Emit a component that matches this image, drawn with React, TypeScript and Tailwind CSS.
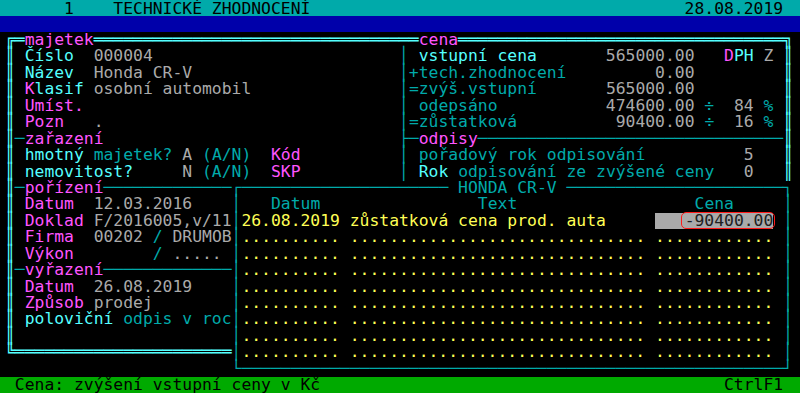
import React from "react";

type Seg = [string, string];

const F = "text-[#55ffff]"; // double frame
const BC = "text-[#55ffff]"; // bright cyan labels
const DC = "text-[#00aaaa]"; // dark cyan
const M = "text-[#ff55ff]"; // magenta
const G = "text-[#aaaaaa]"; // gray values
const Y = "text-[#ffff55]"; // yellow

const sp = (n: number) => " ".repeat(n);
const rep = (ch: string, n: number) => ch.repeat(n);

function Line({ segs, className = "" }: { segs: Seg[]; className?: string }) {
  return (
    <div className={"h-[16.45px] whitespace-pre pl-[5px] " + className}>
      {segs.map(([t, c], i) => (
        <span key={i} className={c}>
          {t}
        </span>
      ))}
    </div>
  );
}

const dots: Seg[] = [
  ["│", DC],
  [rep(".", 10) + " " + rep(".", 30) + " " + rep(".", 12) + " ", Y],
  ["│", DC],
];

export default function App() {
  return (
    <div className="w-[800px] h-[393px] bg-black overflow-hidden font-['DejaVu_Sans_Mono',monospace] text-[16.38px] leading-[16.45px] flex flex-col">
      {/* title bar */}
      <div className="h-[16px] leading-[18px] bg-[#00aaaa] text-black whitespace-pre pl-[5px]">
        {sp(6) + "1" + sp(4) + "TECHNICKÉ ZHODNOCENÍ" + sp(38) + "28.08.2019"}
      </div>
      <div className="h-[16px] bg-[#0000aa]" />

      {/* body */}
      <div className="flex flex-col">
        <Line
          segs={[
            ["╔═", F],
            ["majetek", M],
            [rep("═", 33), F],
            ["cena", M],
            [rep("═", 33) + "╗", F],
          ]}
        />
        <Line
          segs={[
            ["║ ", F],
            ["Číslo", BC],
            ["  ", ""],
            ["000004", G],
            [sp(25), ""],
            ["│ ", DC],
            ["vstupní cena", BC],
            [sp(7), ""],
            ["565000.00", G],
            [sp(3), ""],
            ["D", M],
            ["PH", BC],
            [" ", ""],
            ["Z", G],
            [" ", ""],
            ["║", F],
          ]}
        />
        <Line
          segs={[
            ["║ ", F],
            ["Název", BC],
            ["  ", ""],
            ["Honda CR-V", G],
            [sp(21), ""],
            ["│", DC],
            ["+tech.zhodnocení", DC],
            [sp(9), ""],
            ["0.00", G],
            [sp(9), ""],
            ["║", F],
          ]}
        />
        <Line
          segs={[
            ["║ ", F],
            ["K", M],
            ["lasif", BC],
            [" ", ""],
            ["osobní automobil", G],
            [sp(15), ""],
            ["│", DC],
            ["=zvýš.vstupní", DC],
            [sp(7), ""],
            ["565000.00", G],
            [sp(9), ""],
            ["║", F],
          ]}
        />
        <Line
          segs={[
            ["║ ", F],
            ["Umíst.", M],
            [sp(32), ""],
            ["│ ", DC],
            ["odepsáno", DC],
            [sp(11), ""],
            ["474600.00", G],
            [" ", ""],
            ["÷", DC],
            ["  ", ""],
            ["84", G],
            [" ", ""],
            ["%", DC],
            [" ", ""],
            ["║", F],
          ]}
        />
        <Line
          segs={[
            ["║ ", F],
            ["Pozn", M],
            ["   ", ""],
            [".", G],
            [sp(30), ""],
            ["│", DC],
            ["=zůstatková", DC],
            [sp(10), ""],
            ["90400.00", G],
            [" ", ""],
            ["÷", DC],
            ["  ", ""],
            ["16", G],
            [" ", ""],
            ["%", DC],
            [" ", ""],
            ["║", F],
          ]}
        />
        <Line
          segs={[
            ["║", F],
            ["─", DC],
            ["zařazení", M],
            [sp(30), ""],
            ["├─", DC],
            ["odpisy", M],
            [rep("─", 31), DC],
            ["║", F],
          ]}
        />
        <Line
          segs={[
            ["║ ", F],
            ["hmotný", BC],
            [" ", ""],
            ["majetek?", DC],
            [" ", ""],
            ["A", G],
            [" ", ""],
            ["(A/N)", DC],
            ["  ", ""],
            ["Kód", M],
            [sp(10), ""],
            ["│ ", DC],
            ["pořadový rok odpisování", DC],
            [sp(10), ""],
            ["5", G],
            [sp(3), ""],
            ["║", F],
          ]}
        />
        <Line
          segs={[
            ["║ ", F],
            ["nemovitost?", BC],
            [sp(5), ""],
            ["N", G],
            [" ", ""],
            ["(A/N)", DC],
            ["  ", ""],
            ["SKP", M],
            [sp(10), ""],
            ["│ ", DC],
            ["Rok", BC],
            [" ", ""],
            ["odpisování ze zvýšené ceny", DC],
            [sp(3), ""],
            ["0", G],
            [sp(3), ""],
            ["║", F],
          ]}
        />
        <Line
          segs={[
            ["║", F],
            ["─", DC],
            ["pořízení", M],
            [rep("─", 13), DC],
            ["┌" + rep("─", 21) + " ", DC],
            ["HONDA CR-V", DC],
            [" " + rep("─", 22) + "┐", DC],
          ]}
        />
        <Line
          segs={[
            ["║ ", F],
            ["Datum", M],
            ["  ", ""],
            ["12.03.2016", G],
            [sp(4), ""],
            ["│", DC],
            [sp(3), ""],
            ["Datum", DC],
            [sp(16), ""],
            ["Text", DC],
            [sp(18), ""],
            ["Cena", DC],
            [sp(5), ""],
            ["│", DC],
          ]}
        />
        {/* selected row */}
        <div className="h-[16.45px] whitespace-pre pl-[5px]">
          <span className={F}>║ </span>
          <span className={M}>Doklad</span>
          <span> </span>
          <span className={G}>F/2016005,v/11</span>
          <span className={DC}>│</span>
          <span className={Y}>26.08.2019 zůstatková cena prod. auta</span>
          <span>{sp(5)}</span>
          <span className="inline-block h-[16.45px] align-top bg-[#aaaaaa] text-[#202020]">
            {sp(3)}
            <span className="relative inline-block h-[16.45px] align-top">
              -90400.00
              <span className="absolute top-[-1px] bottom-[0px] left-[-4px] right-[-2px] rounded-[5px] border-[1.5px] border-[#ff1a1a]" />
            </span>
          </span>
          <span> </span>
          <span className={DC}>│</span>
        </div>
        <Line
          segs={[
            ["║ ", F],
            ["Firma", M],
            ["  ", ""],
            ["00202", G],
            [" ", ""],
            ["/", DC],
            [" ", ""],
            ["DRUMOB", G],
            ...dots,
          ]}
        />
        <Line
          segs={[
            ["║ ", F],
            ["Výkon", M],
            [sp(8), ""],
            ["/", DC],
            [" ", ""],
            [".....", G],
            [" ", ""],
            ...dots,
          ]}
        />
        <Line
          segs={[
            ["║", F],
            ["─", DC],
            ["vyřazení", M],
            [rep("─", 13), DC],
            ...dots,
          ]}
        />
        <Line
          segs={[
            ["║ ", F],
            ["Datum", M],
            ["  ", ""],
            ["26.08.2019", G],
            [sp(4), ""],
            ...dots,
          ]}
        />
        <Line
          segs={[
            ["║ ", F],
            ["Způsob", M],
            [" ", ""],
            ["prodej", G],
            [sp(8), ""],
            ...dots,
          ]}
        />
        <Line
          segs={[
            ["║ ", F],
            ["poloviční", BC],
            [" ", ""],
            ["odpis v roc", DC],
            ...dots,
          ]}
        />
        <Line segs={[["║", F], [sp(22), ""], ...dots]} />
        <Line segs={[["╚" + rep("═", 22), F], ...dots]} />
        <Line segs={[[sp(23), ""], ["└" + rep("─", 55) + "┘", DC]]} />
      </div>

      {/* status bar */}
      <div className="h-[15.55px] leading-[15.55px] bg-[#00aa00] text-black whitespace-pre pl-[5px]">
        {" Cena: zvýšení vstupní ceny v Kč" + sp(41) + "CtrlF1"}
      </div>
    </div>
  );
}
